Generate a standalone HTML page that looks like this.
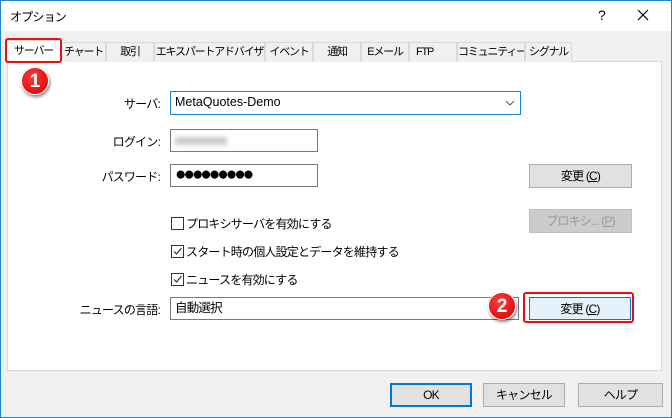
<!DOCTYPE html><html><head><meta charset="utf-8"><style>
*{box-sizing:border-box;margin:0;padding:0}
body{width:672px;height:418px;overflow:hidden;font-family:"Liberation Sans","Noto Sans CJK JP",sans-serif;font-size:12px;color:#000;background:#f0f0f0;position:relative;letter-spacing:-0.8px}
.a{position:absolute;white-space:nowrap}
.win{left:0;top:0;width:672px;height:418px;border:1px solid #1883d7}
.title{left:1px;top:1px;width:670px;height:30px;background:#fff}
.tab{top:42px;height:20px;border:1px solid #d9d9d9;border-bottom:none;background:#f0f0f0;text-align:center;line-height:18px;font-size:11px;overflow:hidden;letter-spacing:-1.2px}
.panel{left:7px;top:61px;width:655px;height:310px;background:#fff;border:1px solid #d9d9d9}
.inp{border:1px solid #7a7a7a;background:#fff;padding-left:4px;line-height:21px;font-size:12.5px}
.btn{border:1px solid #adadad;background:#e1e1e1;text-align:center;line-height:22px}
.lbl{text-align:right;width:160px;left:0}
.cb{width:13px;height:13px;border:1px solid #333;background:#fff}
.circ{width:28px;height:28px;border-radius:50%;background:radial-gradient(circle at 40% 35%,#ff3b3b,#d00000);color:#fff;font-weight:bold;font-size:19px;text-align:center;line-height:28px;box-shadow:1px 2px 3px rgba(0,0,0,.5);border:1px solid #fff;letter-spacing:0}
</style></head><body>
<div class="a win"></div>
<div class="a title"></div>
<div class="a" style="left:10px;top:8px">オプション</div>
<div class="a" style="left:598px;top:7px;font-size:14px">?</div>
<svg class="a" style="left:637px;top:9px" width="12" height="12"><path d="M1 1L11 11M11 1L1 11" stroke="#000" stroke-width="1.2"/></svg>
<div class="a panel"></div>
<div class="a tab" style="left:6px;width:55px;top:40px;height:23px;background:#fff;z-index:2;line-height:21px">サーバー</div>
<div class="a tab" style="left:61px;width:45px">チャート</div>
<div class="a tab" style="left:106px;width:48px">取引</div>
<div class="a tab" style="left:154px;width:111px">エキスパートアドバイザ</div>
<div class="a tab" style="left:265px;width:48px">イベント</div>
<div class="a tab" style="left:313px;width:48px">通知</div>
<div class="a tab" style="left:361px;width:48px">Eメール</div>
<div class="a tab" style="left:409px;width:48px;text-align:left;padding-left:6px">FTP</div>
<div class="a tab" style="left:457px;width:68px">コミュニティー</div>
<div class="a tab" style="left:525px;width:47px">シグナル</div>
<div class="a" style="left:5px;top:38px;width:57px;height:25px;border:2px solid #e81010;border-radius:3px;z-index:3"></div>
<div class="a circ" style="left:21px;top:67px">1</div>
<div class="a lbl" style="top:95px">サーバ:</div>
<div class="a inp" style="left:170px;top:91px;width:351px;height:24px;border-color:#1883d7;letter-spacing:0">MetaQuotes-Demo</div>
<svg class="a" style="left:505px;top:100px" width="10" height="6"><path d="M1 1L5 5L9 1" stroke="#555" fill="none"/></svg>
<div class="a lbl" style="top:133px">ログイン:</div>
<div class="a inp" style="left:170px;top:129px;width:148px;height:23px"><span style="display:inline-block;width:52px;height:8px;background:#ccc;filter:blur(2px);margin-top:7px;vertical-align:top"></span></div>
<div class="a lbl" style="top:168px">パスワード:</div>
<div class="a inp" style="left:170px;top:164px;width:148px;height:23px;font-size:19px;line-height:20px;letter-spacing:-3px">●●●●●●●●●</div>
<div class="a btn" style="left:529px;top:164px;width:103px;height:24px">変更 (<u>C</u>)</div>
<div class="a btn" style="left:529px;top:209px;width:103px;height:24px;color:#999;border-color:#bfbfbf;background:#ccc">プロキシ... (<u>P</u>)</div>
<div class="a cb" style="left:171px;top:217px"></div><div class="a" style="left:186px;top:215px">プロキシサーバを有効にする</div>
<div class="a cb" style="left:171px;top:245px"><svg width="11" height="11" style="display:block"><path d="M2 5.5L4.5 8L9.5 2" stroke="#333" fill="none" stroke-width="1.2"/></svg></div><div class="a" style="left:186px;top:243px">スタート時の個人設定とデータを維持する</div>
<div class="a cb" style="left:171px;top:273px"><svg width="11" height="11" style="display:block"><path d="M2 5.5L4.5 8L9.5 2" stroke="#333" fill="none" stroke-width="1.2"/></svg></div><div class="a" style="left:186px;top:271px">ニュースを有効にする</div>
<div class="a lbl" style="top:301px">ニュースの言語:</div>
<div class="a inp" style="left:170px;top:297px;width:349px;height:23px">自動選択</div>
<div class="a" style="left:523px;top:292px;width:111px;height:31px;border:2px solid #e81010;border-radius:3px"></div>
<div class="a btn" style="left:529px;top:297px;width:102px;height:23px;background:#e5f1fb;border-color:#0078d7">変更 (<u>C</u>)</div>
<div class="a circ" style="left:488px;top:292px">2</div>
<div class="a btn" style="left:390px;top:383px;width:82px;height:24px;border:2px solid #0078d7;line-height:20px">OK</div>
<div class="a btn" style="left:483px;top:383px;width:82px;height:24px">キャンセル</div>
<div class="a btn" style="left:578px;top:383px;width:85px;height:24px">ヘルプ</div>
</body></html>
